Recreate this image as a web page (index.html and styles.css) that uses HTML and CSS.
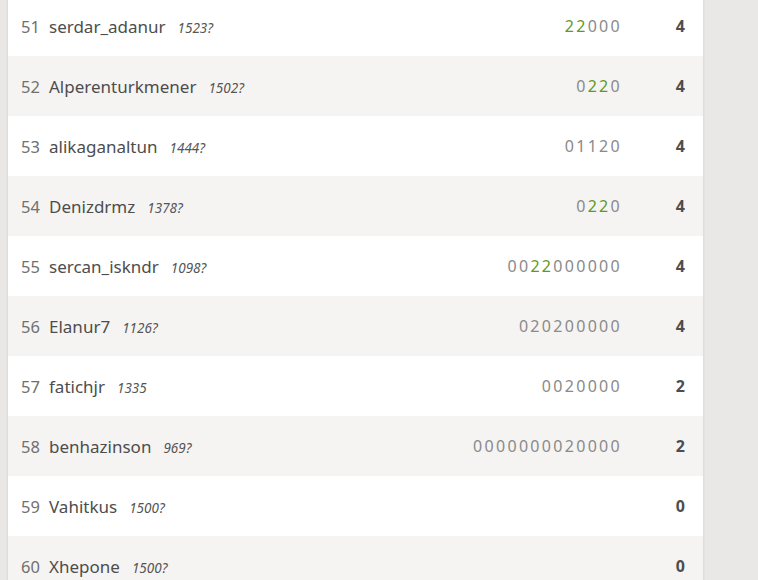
FILE: index.html
```html
<!DOCTYPE html>
<html lang="en">
<head>
    <meta charset="UTF-8">
    <title>Standings</title>
    <link rel="stylesheet" href="styles.css">
</head>
<body>
    <div class="standing-box">
        <table class="standing">
            <tbody>
                <tr>
                    <td class="rank">51</td>
                    <td class="player"><span class="name">serdar_adanur</span><em class="rating">1523?</em></td>
                    <td class="sheet"><span class="win">2</span><span class="win">2</span>000</td>
                    <td class="total">4</td>
                </tr>
                <tr>
                    <td class="rank">52</td>
                    <td class="player"><span class="name">Alperenturkmener</span><em class="rating">1502?</em></td>
                    <td class="sheet">0<span class="win">2</span><span class="win">2</span>0</td>
                    <td class="total">4</td>
                </tr>
                <tr>
                    <td class="rank">53</td>
                    <td class="player"><span class="name">alikaganaltun</span><em class="rating">1444?</em></td>
                    <td class="sheet">01120</td>
                    <td class="total">4</td>
                </tr>
                <tr>
                    <td class="rank">54</td>
                    <td class="player"><span class="name">Denizdrmz</span><em class="rating">1378?</em></td>
                    <td class="sheet">0<span class="win">2</span><span class="win">2</span>0</td>
                    <td class="total">4</td>
                </tr>
                <tr>
                    <td class="rank">55</td>
                    <td class="player"><span class="name">sercan_iskndr</span><em class="rating">1098?</em></td>
                    <td class="sheet">00<span class="win">2</span><span class="win">2</span>000000</td>
                    <td class="total">4</td>
                </tr>
                <tr>
                    <td class="rank">56</td>
                    <td class="player"><span class="name">Elanur7</span><em class="rating">1126?</em></td>
                    <td class="sheet">020200000</td>
                    <td class="total">4</td>
                </tr>
                <tr>
                    <td class="rank">57</td>
                    <td class="player"><span class="name">fatichjr</span><em class="rating">1335</em></td>
                    <td class="sheet">0020000</td>
                    <td class="total">2</td>
                </tr>
                <tr>
                    <td class="rank">58</td>
                    <td class="player"><span class="name">benhazinson</span><em class="rating">969?</em></td>
                    <td class="sheet">0000000020000</td>
                    <td class="total">2</td>
                </tr>
                <tr>
                    <td class="rank">59</td>
                    <td class="player"><span class="name">Vahitkus</span><em class="rating">1500?</em></td>
                    <td class="sheet"></td>
                    <td class="total">0</td>
                </tr>
                <tr>
                    <td class="rank">60</td>
                    <td class="player"><span class="name">Xhepone</span><em class="rating">1500?</em></td>
                    <td class="sheet"></td>
                    <td class="total">0</td>
                </tr>
            </tbody>
        </table>
    </div>
</body>
</html>
```

FILE: styles.css
```css
html, body {
    height: 100%;
}
body {
    margin: 0;
    background: #e9e8e6;
    font-family: "Noto Sans", "Open Sans", sans-serif;
    color: #4d4d4d;
    overflow: hidden;
}
.standing-box {
    width: 695px;
    margin-left: 8px;
    background: #fff;
    box-shadow: 0 2px 3px rgba(0, 0, 0, 0.12);
}
.standing {
    width: 100%;
    border-collapse: collapse;
    margin-top: -4px;
}
.standing tr {
    height: 60px;
}
.standing tr:nth-child(even) {
    background: #f5f4f2;
}
.standing td {
    padding: 0;
    vertical-align: middle;
    white-space: nowrap;
}
.rank {
    width: 28px;
    padding-left: 13px !important;
    font-size: 16.5px;
    color: #707070;
}
.player {
    font-size: 0;
}
.name {
    font-size: 17px;
    color: #4d4d4d;
}
.rating {
    font-size: 13.5px;
    margin-left: 12px;
    color: #555;
}
.sheet {
    text-align: right;
    font-size: 16px;
    letter-spacing: 2.3px;
    color: #8a8a8a;
    padding-right: 45px !important;
}
.sheet .win {
    color: #629924;
}
.total {
    width: 18px;
    padding-right: 18px !important;
    text-align: right;
    font-weight: bold;
    font-size: 16px;
    color: #4d4d4d;
}
```
